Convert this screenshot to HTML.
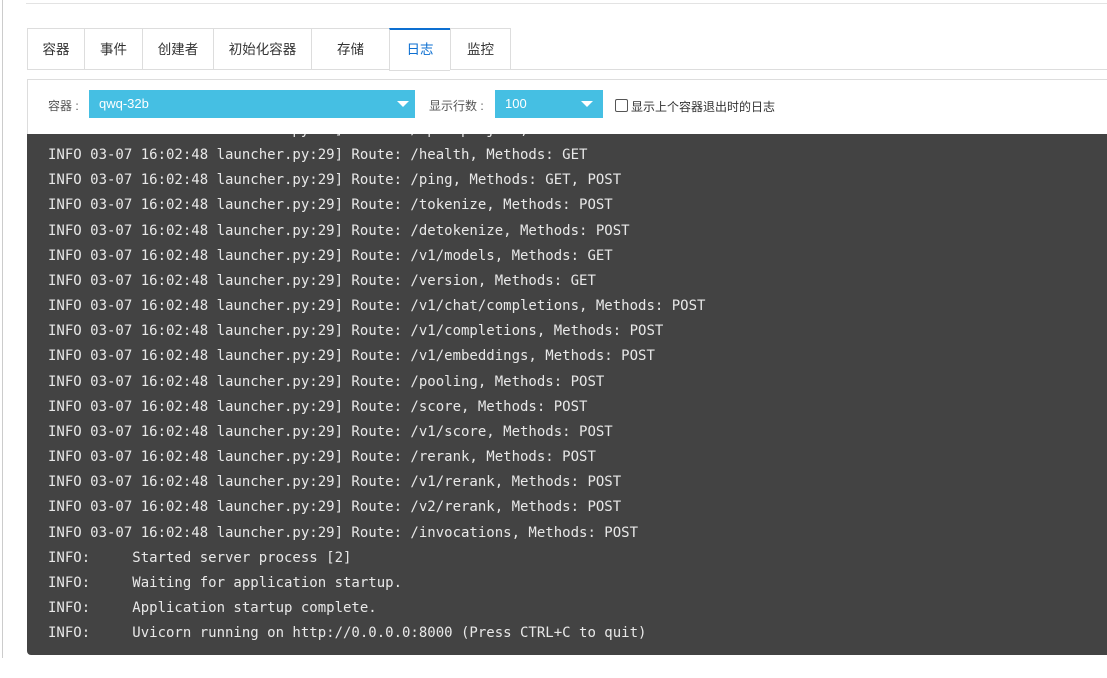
<!DOCTYPE html>
<html><head><meta charset="utf-8"><style>
body{margin:0;width:1107px;height:678px;background:#fff;position:relative;overflow:hidden;font-family:"Liberation Sans","Noto Sans CJK SC",sans-serif;}
.abs{position:absolute}
.tab{position:absolute;top:28px;height:42px;border:1px solid #ddd;border-right:none;box-sizing:border-box;font-size:13.5px;color:#333;text-align:center;line-height:42px;background:#fff}
.log{position:absolute;left:27px;top:134px;width:1090px;height:521px;background:#434343;border-radius:0 0 0 4px;overflow:hidden}
.log pre{margin:0;position:absolute;left:21px;top:-16px;font-family:"DejaVu Sans Mono","Liberation Mono",monospace;font-size:14px;line-height:25.15px;color:#e8e8e8}
</style></head><body>
<div class="abs" style="left:2px;top:0;width:1px;height:658px;background:#ccc"></div>
<div class="abs" style="left:26px;top:3px;width:1081px;height:1px;background:#e3e3e3"></div>
<div class="abs" style="left:27px;top:69px;width:1080px;height:1px;background:#ddd"></div>
<div class="tab" style="left:27px;width:57px">容器</div>
<div class="tab" style="left:84px;width:58px">事件</div>
<div class="tab" style="left:142px;width:71px">创建者</div>
<div class="tab" style="left:213px;width:98px">初始化容器</div>
<div class="tab" style="left:311px;width:78px">存储</div>
<div class="tab" style="left:389px;width:61px;color:#0d6fd1;border-top:2px solid #0d6fd1;height:43px;line-height:40px">日志</div>
<div class="tab" style="left:450px;width:61px;border-right:1px solid #ddd">监控</div>
<div class="abs" style="left:27px;top:79px;width:1090px;height:56px;border:1px solid #ddd;box-sizing:border-box"></div>
<div class="abs" style="left:48px;top:97px;font-size:12px;color:#555">容器 :</div>
<div class="abs" style="left:89px;top:90px;width:326px;height:28px;background:#45bfe3;color:#fff;font-size:13px;line-height:28px;padding-left:10px;box-sizing:border-box">qwq-32b</div>
<div class="abs" style="left:397px;top:101px;width:0;height:0;border-left:6px solid transparent;border-right:6px solid transparent;border-top:6px solid #fff"></div>
<div class="abs" style="left:429px;top:97px;font-size:12px;color:#555">显示行数 :</div>
<div class="abs" style="left:495px;top:90px;width:108px;height:28px;background:#45bfe3;color:#fff;font-size:13px;line-height:28px;padding-left:10px;box-sizing:border-box">100</div>
<div class="abs" style="left:581px;top:101px;width:0;height:0;border-left:6px solid transparent;border-right:6px solid transparent;border-top:6px solid #fff"></div>
<div class="abs" style="left:615px;top:99px;width:11px;height:11px;border:1px solid #555;border-radius:2px"></div>
<div class="abs" style="left:631px;top:98px;font-size:12px;color:#333">显示上个容器退出时的日志</div>
<div class="log"><pre>INFO 03-07 16:02:48 launcher.py:29] Route: /openapi.json, Methods: GET
INFO 03-07 16:02:48 launcher.py:29] Route: /health, Methods: GET
INFO 03-07 16:02:48 launcher.py:29] Route: /ping, Methods: GET, POST
INFO 03-07 16:02:48 launcher.py:29] Route: /tokenize, Methods: POST
INFO 03-07 16:02:48 launcher.py:29] Route: /detokenize, Methods: POST
INFO 03-07 16:02:48 launcher.py:29] Route: /v1/models, Methods: GET
INFO 03-07 16:02:48 launcher.py:29] Route: /version, Methods: GET
INFO 03-07 16:02:48 launcher.py:29] Route: /v1/chat/completions, Methods: POST
INFO 03-07 16:02:48 launcher.py:29] Route: /v1/completions, Methods: POST
INFO 03-07 16:02:48 launcher.py:29] Route: /v1/embeddings, Methods: POST
INFO 03-07 16:02:48 launcher.py:29] Route: /pooling, Methods: POST
INFO 03-07 16:02:48 launcher.py:29] Route: /score, Methods: POST
INFO 03-07 16:02:48 launcher.py:29] Route: /v1/score, Methods: POST
INFO 03-07 16:02:48 launcher.py:29] Route: /rerank, Methods: POST
INFO 03-07 16:02:48 launcher.py:29] Route: /v1/rerank, Methods: POST
INFO 03-07 16:02:48 launcher.py:29] Route: /v2/rerank, Methods: POST
INFO 03-07 16:02:48 launcher.py:29] Route: /invocations, Methods: POST
INFO:     Started server process [2]
INFO:     Waiting for application startup.
INFO:     Application startup complete.
INFO:     Uvicorn running on http://0.0.0.0:8000 (Press CTRL+C to quit)</pre></div>
</body></html>
